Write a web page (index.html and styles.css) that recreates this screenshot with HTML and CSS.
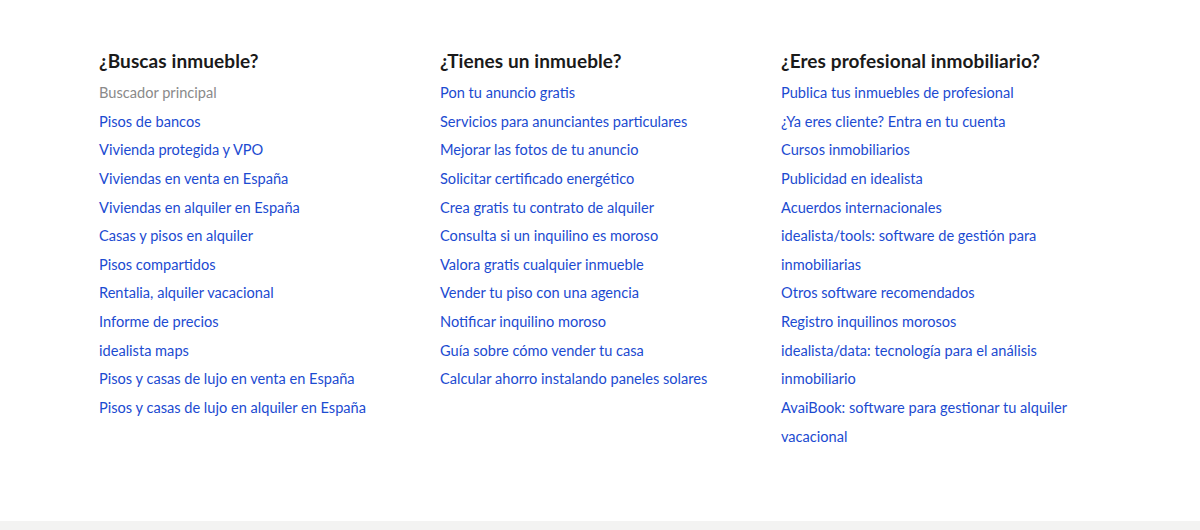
FILE: index.html
```html
<!DOCTYPE html>
<html lang="es">
<head>
    <meta charset="UTF-8">
    <title>idealista - enlaces</title>
    <link rel="stylesheet" href="styles.css">
</head>
<body>
    <div class="footer-links">
        <div class="link-column">
            <h3>¿Buscas inmueble?</h3>
            <ul>
                <li><a class="current" href="#">Buscador principal</a></li>
                <li><a href="#">Pisos de bancos</a></li>
                <li><a href="#">Vivienda protegida y VPO</a></li>
                <li><a href="#">Viviendas en venta en España</a></li>
                <li><a href="#">Viviendas en alquiler en España</a></li>
                <li><a href="#">Casas y pisos en alquiler</a></li>
                <li><a href="#">Pisos compartidos</a></li>
                <li><a href="#">Rentalia, alquiler vacacional</a></li>
                <li><a href="#">Informe de precios</a></li>
                <li><a href="#">idealista maps</a></li>
                <li><a href="#">Pisos y casas de lujo en venta en España</a></li>
                <li><a href="#">Pisos y casas de lujo en alquiler en España</a></li>
            </ul>
        </div>

        <div class="link-column">
            <h3>¿Tienes un inmueble?</h3>
            <ul>
                <li><a href="#">Pon tu anuncio gratis</a></li>
                <li><a href="#">Servicios para anunciantes particulares</a></li>
                <li><a href="#">Mejorar las fotos de tu anuncio</a></li>
                <li><a href="#">Solicitar certificado energético</a></li>
                <li><a href="#">Crea gratis tu contrato de alquiler</a></li>
                <li><a href="#">Consulta si un inquilino es moroso</a></li>
                <li><a href="#">Valora gratis cualquier inmueble</a></li>
                <li><a href="#">Vender tu piso con una agencia</a></li>
                <li><a href="#">Notificar inquilino moroso</a></li>
                <li><a href="#">Guía sobre cómo vender tu casa</a></li>
                <li><a href="#">Calcular ahorro instalando paneles solares</a></li>
            </ul>
        </div>

        <div class="link-column">
            <h3>¿Eres profesional inmobiliario?</h3>
            <ul>
                <li><a href="#">Publica tus inmuebles de profesional</a></li>
                <li><a href="#">¿Ya eres cliente? Entra en tu cuenta</a></li>
                <li><a href="#">Cursos inmobiliarios</a></li>
                <li><a href="#">Publicidad en idealista</a></li>
                <li><a href="#">Acuerdos internacionales</a></li>
                <li><a href="#">idealista/tools: software de gestión para inmobiliarias</a></li>
                <li><a href="#">Otros software recomendados</a></li>
                <li><a href="#">Registro inquilinos morosos</a></li>
                <li><a href="#">idealista/data: tecnología para el análisis inmobiliario</a></li>
                <li><a href="#">AvaiBook: software para gestionar tu alquiler vacacional</a></li>
            </ul>
        </div>
    </div>

    <div class="footer-bottom"></div>
</body>
</html>
```

FILE: styles.css
```css
:root {
    --text-color: #1a1a1a;
    --link-color: #1c4bd1;
    --muted-color: #8a8a8a;
    --strip-color: #f3f3f2;
}

body {
    margin: 0;
    font-family: Lato, "Liberation Sans", sans-serif;
    background: #ffffff;
    color: var(--text-color);
}

.footer-links {
    display: grid;
    grid-template-columns: repeat(3, 341px);
    padding: 47px 0 0 99px;
    height: 521px;
    box-sizing: border-box;
}

.link-column h3 {
    margin: 0 0 4px;
    font-size: 19px;
    line-height: 28px;
    font-weight: bold;
    letter-spacing: 0.1px;
}

.link-column ul {
    list-style: none;
    margin: 0;
    padding: 0;
    width: 300px;
}

.link-column li {
    font-size: 14.6px;
    line-height: 28.63px;
}

.link-column a {
    color: var(--link-color);
    text-decoration: none;
}

.link-column a.current {
    color: var(--muted-color);
}

.footer-bottom {
    height: 9px;
    background: var(--strip-color);
}
```
